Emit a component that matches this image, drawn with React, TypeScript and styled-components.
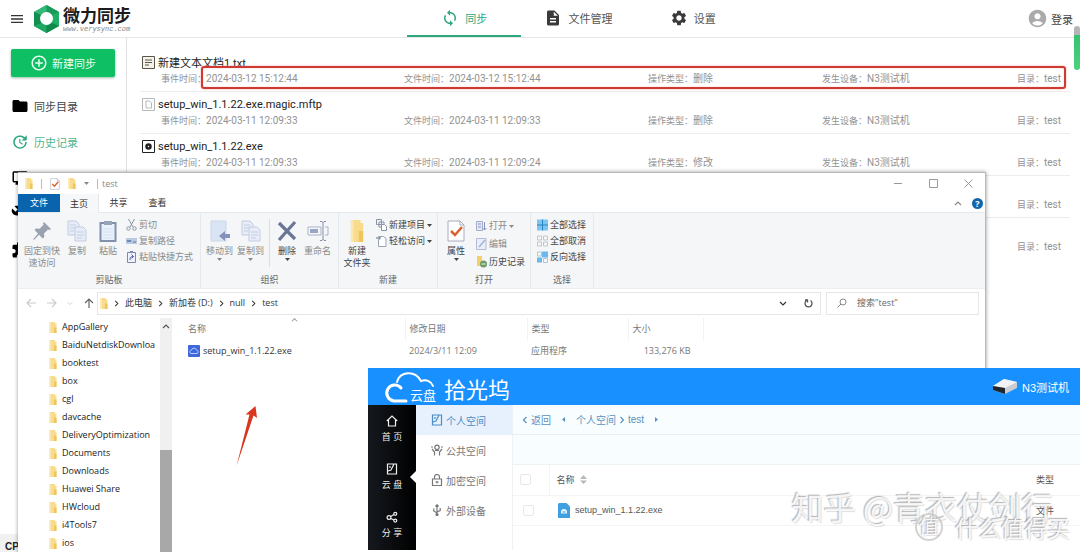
import React from 'react';
import styled, { createGlobalStyle, css } from 'styled-components';
import {
  MdMenu, MdSync, MdDescription, MdSettings, MdAccountCircle, MdFolder, MdUpdate,
  MdAddCircleOutline, MdOutlineMonitor, MdBuild, MdExtension,
} from 'react-icons/md';

const uiFont = `Roboto, "Noto Sans CJK SC", sans-serif`;
const winFont = `"Open Sans", "Noto Sans CJK SC", sans-serif`;
const cloudFont = `"Liberation Sans", "Noto Sans CJK SC", sans-serif`;
const green = '#2fa87c';

const GlobalStyle = createGlobalStyle`
  *, *::before, *::after { box-sizing: border-box; }
  body { margin: 0; background: #fff; font-family: ${uiFont}; color: #333; }
  button, input { font: inherit; color: inherit; margin: 0; }
  button { padding: 0; border: 0; background: none; cursor: pointer; }
  ul, dl, dd { margin: 0; padding: 0; list-style: none; }
  a { color: inherit; text-decoration: none; }
  svg { display: block; flex: none; }
`;

/* ---------- sync application ---------- */

const Page = styled.div`
  position: relative;
  display: flex;
  flex-direction: column;
  min-height: 100vh;
  overflow: hidden;
`;

const Header = styled.header`
  display: grid;
  grid-template-columns: 407fr 343px 330fr;
  height: 38px;
  border-bottom: 1px solid #e6e8e8;
`;

const Brand = styled.div`
  display: flex;
  align-items: center;
  padding-left: 9px;
  gap: 9px;
`;

const IconButton = styled.button`
  display: flex;
  color: #333;
`;

const BrandLink = styled.a`
  display: flex;
  align-items: center;
  gap: 4px;
`;

const BrandText = styled.span`
  display: flex;
  flex-direction: column;
`;

const BrandName = styled.span`
  font-size: 17px;
  line-height: 20px;
  font-weight: 700;
  color: #1c1c1c;
`;

const BrandUrl = styled.span`
  font: italic 7px/6px "Liberation Mono", monospace;
  color: #888;
`;

const Tabs = styled.nav`
  display: flex;
`;

const Tab = styled.button<{ $active?: boolean }>`
  flex: 1;
  display: flex;
  align-items: center;
  justify-content: center;
  gap: 6px;
  font-size: 11px;
  color: ${p => (p.$active ? green : '#555')};
  border-bottom: 2px solid ${p => (p.$active ? green : 'transparent')};
  svg { color: ${p => (p.$active ? green : '#3a3a3a')}; }
`;

const Login = styled.button`
  display: flex;
  align-items: center;
  justify-self: end;
  gap: 3px;
  padding-right: 7px;
  font-size: 11px;
  color: #444;
  svg { color: #aaa; }
`;

const Body = styled.div`
  flex: 1;
  display: flex;
`;

const Sidebar = styled.aside`
  flex: 0 0 127px;
  display: flex;
  flex-direction: column;
  border-right: 1px solid #e2e2e2;
`;

const NewSync = styled.button`
  display: flex;
  align-items: center;
  justify-content: center;
  gap: 4px;
  height: 28px;
  margin: 11px;
  border-radius: 2px;
  background: #0ebf63;
  box-shadow: 0 1px 3px rgba(0, 90, 40, 0.4);
  color: #eafff3;
  font-size: 11px;
`;

const SideItem = styled.button<{ $active?: boolean }>`
  display: flex;
  align-items: center;
  gap: 5px;
  width: 100%;
  height: 36px;
  padding-left: 11px;
  font-size: 11px;
  color: ${p => (p.$active ? '#4fb58e' : '#444')};
  svg { color: ${p => (p.$active ? green : '#000')}; }
`;

const SideFooter = styled.footer`
  height: 18px;
  margin-top: auto;
  padding-left: 5px;
  overflow: hidden;
  background: #f1f1f1;
  font: 700 10px/26px ${cloudFont};
  color: #222;
`;

const Events = styled.ul`
  flex: 1;
  padding: 12px 10px 0 13px;
`;

const EventRow = styled.li`
  position: relative;
  padding: 4px 0 3px 2px;
  border-bottom: 1px solid #ececec;
  &:last-child { border-bottom-color: transparent; }
`;

const EventName = styled.div`
  display: flex;
  align-items: center;
  gap: 3px;
  height: 16px;
  font-size: 11px;
  color: #222;
`;

const EventMeta = styled.dl`
  display: grid;
  grid-template-columns: 243fr 244fr 174fr 195fr 53fr;
  height: 18px;
  padding-left: 19px;
  line-height: 18px;
  color: #929292;
  white-space: nowrap;
  div { display: flex; }
  dt { font-size: 9px; }
  dd { font-size: 10px; }
`;

const Highlight = styled.div`
  position: absolute;
  top: 16px;
  right: 4px;
  bottom: 2px;
  left: 61px;
  border: 2px solid #cc3a31;
  border-radius: 3px;
  box-shadow: 0 0 2px #f09a94, inset 0 0 2px #f7c4c0;
`;

const PageScroll = styled.div`
  position: absolute;
  top: 26px;
  right: 0;
  width: 6px;
  height: 44px;
  border-radius: 3px;
  background: linear-gradient(#b5b5b5 9px, #35c46d 9px, #4fd07f);
`;

/* ---------- file explorer window ---------- */

const Explorer = styled.section`
  position: absolute;
  top: 172px;
  right: 94px;
  left: 18px;
  background: #fff;
  border-top: 1px solid #b9b9b9;
  border-right: 1px solid #b9b9b9;
  box-shadow: 0 0 4px rgba(0, 0, 0, 0.4);
  font-family: ${winFont};
  font-size: 9px;
  line-height: 12px;
  color: #444;
`;

const TitleBar = styled.div`
  display: flex;
  align-items: center;
  height: 21px;
  padding: 0 12px 0 7px;
  gap: 8px;
  color: #888;
`;

const Bar = styled.i`
  width: 1px;
  height: 10px;
  background: #bbb;
`;

const WindowButtons = styled.div`
  display: flex;
  gap: 26px;
  margin-left: auto;
  color: #999;
`;

const Title = styled.span`
  display: flex;
  align-items: center;
  gap: 4px;
`;

const RibbonTabs = styled.div`
  display: flex;
  align-items: stretch;
  height: 19px;
  padding-right: 2px;
  border-bottom: 1px solid #e6e9ea;
`;

const RibbonTab = styled.button<{ $kind?: 'file' | 'open' }>`
  width: 39px;
  color: #333;
  ${p => p.$kind === 'file' && css`
    width: 42px;
    background: #0a64ad;
    color: #fff;
  `}
  ${p => p.$kind === 'open' && css`
    background: #f5f7f8;
    border-right: 1px solid #e6e9ea;
    margin-bottom: -1px;
  `}
`;

const TabTools = styled.div`
  display: flex;
  align-items: center;
  gap: 10px;
  margin-left: auto;
  color: #888;
`;

const Help = styled.button`
  width: 11px;
  height: 11px;
  border-radius: 50%;
  background: #1166ab;
  color: #fff;
  font-weight: 700;
  line-height: 11px;
`;

const Ribbon = styled.div`
  display: flex;
  height: 76px;
  background: #f4f6f7;
  border-bottom: 1px solid #eceeef;
`;

const Group = styled.div<{ $width: number; $pad: number }>`
  display: flex;
  flex-direction: column;
  width: ${p => p.$width}px;
  padding-top: 4px;
  border-right: 1px solid #e6e9eb;
  > div { padding-left: ${p => p.$pad}px; }
  > span { text-align: center; line-height: 14px; color: #666; }
`;

const GroupTools = styled.div`
  display: flex;
  height: 56px;
`;

const BigButton = styled.button<{ $width: number; $dim?: boolean }>`
  display: flex;
  flex-direction: column;
  align-items: center;
  width: ${p => p.$width}px;
  color: ${p => (p.$dim ? '#8a8a8a' : '#444')};
  svg:first-child { margin: 3px 0; }
  span { white-space: nowrap; }
`;

const Divider = styled.i`
  width: 1px;
  height: 48px;
  margin: 2px 2px 0 3px;
  background: #dcdfe2;
`;

const SmallList = styled.div<{ $pitch: number }>`
  display: flex;
  flex-direction: column;
  padding-left: 3px;
  button { height: ${p => p.$pitch}px; }
`;

const SmallButton = styled.button<{ $dim?: boolean }>`
  display: flex;
  align-items: center;
  gap: 2px;
  white-space: nowrap;
  color: ${p => (p.$dim ? '#8a8a8a' : '#444')};
`;

const AddressRow = styled.div`
  display: flex;
  align-items: center;
  height: 27px;
  padding: 1px 6px 0 8px;
`;

const NavArrows = styled.div`
  display: flex;
  align-items: center;
  justify-content: space-between;
  width: 68px;
  margin-right: 3px;
`;

const Address = styled.div`
  flex: 1;
  display: flex;
  align-items: center;
  gap: 5px;
  height: 23px;
  padding: 0 7px 0 2px;
  border: 1px solid #e6e6e6;
  color: #333;
  button:last-child { margin-left: 12px; }
`;

const Spacer = styled.span`
  flex: 1;
`;

const Search = styled.label`
  display: flex;
  align-items: center;
  gap: 10px;
  width: 153px;
  height: 23px;
  margin-left: 5px;
  padding-left: 10px;
  border: 1px solid #e6e6e6;
  input {
    width: 100px;
    padding: 0;
    border: 0;
    outline: 0;
    background: none;
  }
  input::placeholder { color: #666; opacity: 1; }
`;

const Panes = styled.div`
  display: flex;
  padding: 2px 0 2px;
`;

const Tree = styled.ul`
  width: 142px;
  overflow: hidden;
  padding-left: 31px;
`;

const TreeItem = styled.button`
  display: flex;
  align-items: center;
  gap: 5px;
  height: 18px;
  color: #222;
  white-space: nowrap;
`;

const TreeScroll = styled.div`
  display: flex;
  flex-direction: column;
  align-items: center;
  justify-content: space-between;
  width: 12px;
  padding-top: 4px;
  background: #f0f0f0;
  &::after {
    content: '';
    width: 12px;
    height: 102px;
    background: #a8a8a8;
  }
`;

const FilePane = styled.div`
  position: relative;
  flex: 1;
`;

const FileTable = styled.table`
  border-collapse: collapse;
  table-layout: fixed;
  width: 532px;
  th, td {
    height: 22px;
    padding: 0 0 0 4px;
    text-align: left;
    font-weight: 400;
    color: #777;
  }
  th { border-right: 1px solid #f3f3f3; }
  th:first-child, td:first-child { padding-left: 16px; width: 233px; }
  td:first-child { color: #333; }
  th:nth-child(2) { width: 122px; }
  th:nth-child(3) { width: 101px; }
  td:last-child { text-align: right; padding-right: 13px; }
`;

const FileName = styled.span`
  display: flex;
  align-items: center;
  gap: 3px;
`;

const SortMark = styled.span`
  position: absolute;
  top: -2px;
  left: 119px;
  color: #999;
`;

const RedArrow = styled.svg`
  position: absolute;
  top: 87px;
  left: 63px;
`;

/* ---------- cloud drive window ---------- */

const Cloud = styled.section`
  position: absolute;
  top: 368px;
  right: 0;
  left: 368px;
  background: #fff;
  font-family: ${cloudFont};
  font-size: 9px;
  color: #555;
`;

const CloudHeader = styled.header`
  display: flex;
  align-items: center;
  height: 37px;
  padding: 0 11px 0 16px;
  gap: 8px;
  background: #1890ff;
  color: #fff;
`;

const CloudTitle = styled.span`
  font-size: 22px;
  line-height: 26px;
  padding-top: 9px;
`;

const Device = styled.span`
  display: flex;
  align-items: center;
  gap: 5px;
  margin-left: auto;
  font-size: 11px;
`;

const CloudBody = styled.div`
  display: flex;
  align-items: flex-start;
  padding-bottom: 4px;
`;

const Rail = styled.nav`
  width: 48px;
  padding-bottom: 1px;
  background: linear-gradient(90deg, #15191e, #000);
`;

const RailItem = styled.button<{ $active?: boolean }>`
  position: relative;
  display: flex;
  flex-direction: column;
  align-items: center;
  gap: 3px;
  width: 48px;
  height: 48px;
  padding-top: 10px;
  color: #eee;
  line-height: 14px;
  ${p => p.$active && css`
    &::after {
      content: '';
      position: absolute;
      top: 18px;
      right: 0;
      border: 6px solid transparent;
      border-left-width: 0;
      border-right-color: #fff;
    }
  `}
`;

const Spaces = styled.nav`
  align-self: stretch;
  width: 97px;
  border-right: 1px solid #eef2f4;
`;

const SpaceItem = styled.button<{ $active?: boolean }>`
  display: flex;
  align-items: center;
  gap: 3px;
  width: 100%;
  height: 30px;
  padding-left: 15px;
  font-size: 10px;
  color: ${p => (p.$active ? '#4a8cc7' : '#777')};
  background: ${p => (p.$active ? '#e6f1fd' : 'none')};
`;

const CloudMain = styled.div`
  flex: 1;
`;

const Crumbs = styled.div`
  display: flex;
  align-items: center;
  gap: 2px;
  height: 30px;
  padding-left: 8px;
  font-size: 10px;
  color: #5a90bf;
  background: #f8feff;
  border-bottom: 1px solid #e6f0f3;
`;

const CrumbStep = styled.span`
  display: flex;
  padding: 0 8px;
`;

const Toolbar = styled.div`
  height: 30px;
  background: #f8feff;
  border-bottom: 1px solid #edf2f4;
`;

const CloudTable = styled.table`
  width: 100%;
  border-collapse: collapse;
  table-layout: fixed;
  th, td {
    height: 30px;
    padding: 0 7px;
    border-bottom: 1px solid #f2f4f6;
    text-align: left;
    font-weight: 400;
  }
  th:first-child { width: 36px; border-right: 1px solid #f2f4f6; }
  td:first-child { padding-left: 10px; }
  th:last-child { width: 51px; }
  td:nth-child(2) { padding-left: 9px; }
`;

const Check = styled.input`
  display: block;
  appearance: none;
  width: 11px;
  height: 11px;
  border: 1px solid #e6e8ea;
  border-radius: 2px;
  background: #fff;
`;

const Cell = styled.span`
  display: flex;
  align-items: center;
  gap: 5px;
`;

/* ---------- watermarks ---------- */

const Mark = styled.div<{ $size: number; $right: number; $bottom: number }>`
  position: absolute;
  right: ${p => p.$right}px;
  bottom: ${p => p.$bottom}px;
  display: flex;
  align-items: center;
  gap: 12px;
  font-family: "Noto Sans CJK SC", sans-serif;
  font-size: ${p => p.$size}px;
  line-height: ${p => p.$size}px;
  white-space: nowrap;
  color: rgba(255, 255, 255, 0.85);
  text-shadow: -1px -1px 1px rgba(110, 110, 110, 0.5), 1px 1px 1px rgba(150, 150, 150, 0.3);
  pointer-events: none;
`;

const Seal = styled.span`
  width: 28px;
  height: 28px;
  border: 2px solid rgba(200, 200, 200, 0.8);
  border-radius: 50%;
  text-align: center;
  font-size: 20px;
  line-height: 22px;
`;

/* ---------- drawings ---------- */

const HexLogo = () => (
  <svg width="25" height="28" viewBox="0 0 25 28">
    <path d="M12.500 0 25 7v14l-12.500 7L0 21V7z" fill="#16a75c" />
    <path d="M12.500 0 25 7l-7 3-5.500-3z" fill="#1a9a58" />
    <path d="M12.500 0 0 7l7 3 5.500-3z" fill="#35b877" />
    <path d="M0 7v14l7-3v-8z" fill="#128f4e" />
    <path d="M25 7v14l-7-3v-8z" fill="#1fae66" />
    <path d="M0 21l12.500 7v-7L7 18z" fill="#1fa864" />
    <path d="M25 21l-12.500 7v-7L18 18z" fill="#0f8a4a" />
    <circle cx="12.500" cy="13.500" r="6.500" fill="#fff" />
  </svg>
);

const TextFile = () => (
  <svg width="13" height="13" viewBox="0 0 13 13" fill="none" stroke="#5b5748">
    <path d="M.5.5h12v12H.5z" fill="#f4f2ea" />
    <path d="M3 4h7M3 6.500h7M3 9h4" />
  </svg>
);
const BlankFile = () => (
  <svg width="13" height="13" viewBox="0 0 13 13" fill="none" stroke="#b5b8bd">
    <path d="M.5.5h12v12H.5z" />
    <path d="M4 3h3.500l2 2v5H4z" />
  </svg>
);
const ExeFile = () => (
  <svg width="13" height="13" viewBox="0 0 13 13" fill="none" stroke="#222">
    <path d="M.5.5h12v12H.5z" />
    <circle cx="6.500" cy="6.500" r="2" strokeWidth="2.500" />
  </svg>
);

const Folder = ({ w = 8, h = 11 }: { w?: number; h?: number }) => (
  <svg width={w} height={h} viewBox="0 0 8 11" preserveAspectRatio="none">
    <path d="M.5 0H6v1.500h1.500V11H.5z" fill="#f8dc8c" />
    <path d="M5 5.500h2.500V11H5z" fill="#efc55c" />
    <path d="M.5 0H2v11H.5z" fill="#fbe8b0" />
  </svg>
);

const Chevron = ({ dir, size = 8, color = 'currentColor' }: { dir: 'up' | 'down' | 'left' | 'right'; size?: number; color?: string }) => {
  const d = { up: 'M1 6l3-3 3 3', down: 'M1 3l3 3 3-3', left: 'M5.500 1l-3 3 3 3', right: 'M2.500 1l3 3-3 3' }[dir];
  return <svg width={size} height={size} viewBox="0 0 8 8" fill="none" stroke={color} strokeWidth="1.200"><path d={d} /></svg>;
};

const Caret = ({ dir = 'down' }: { dir?: 'down' | 'left' | 'right' }) => {
  const d = { down: 'M0 1h5L2.500 4z', left: 'M4 0v5L1 2.500z', right: 'M1 0v5l3-2.500z' }[dir];
  return <svg width="5" height="5" viewBox="0 0 5 5" fill="currentColor"><path d={d} /></svg>;
};

const LongArrow = ({ dir, color }: { dir: 'left' | 'right' | 'up'; color: string }) => {
  const d = { left: 'M10 5H1M5 1 1 5l4 4', right: 'M0 5h9M5 1l4 4-4 4', up: 'M5 10V1M1 5l4-4 4 4' }[dir];
  return <svg width="10" height="10" viewBox="0 0 10 10" fill="none" stroke={color} strokeWidth="1.200"><path d={d} /></svg>;
};

const LineGlyph = ({ d }: { d: string }) => (
  <svg width="9" height="9" viewBox="0 0 9 9" fill="none" stroke="currentColor"><path d={d} /></svg>
);

const CheckedSheet = ({ w, h }: { w: number; h: number }) => (
  <svg width={w} height={h} viewBox="0 0 18 22" fill="none">
    <path d="M1 1h12l4 4v16H1z" fill="#fff" stroke="#aab" />
    <path d="M13 1v4h4" stroke="#aab" />
    <path d="m4 11 4 4 7-8" stroke="#d8612f" strokeWidth="2.500" />
  </svg>
);

const Pin = () => (
  <svg width="22" height="22" viewBox="0 0 22 22" fill="#9aa1af">
    <path d="m13 2 7 7-1.500 1-1.500-.5-4 4 .3 3.500-1.600 1.500-3.700-3.700L3 20l-.8-.8L7 13.500 3.500 10 5 8.500l3.500.2 4-4L12 3.300z" />
  </svg>
);
const Sheets = () => (
  <svg width="20" height="22" viewBox="0 0 20 22" fill="#e6edf8" stroke="#c3cce0">
    <path d="M1 1h8l3 3v11H1z" />
    <path d="M3 5h6M3 8h6M3 11h4" />
    <path d="M8 7h8l3 3v11H8z" />
    <path d="M10 12h7M10 15h7M10 18h5" />
  </svg>
);
const Clipboard = () => (
  <svg width="18" height="22" viewBox="0 0 18 22" fill="none">
    <path d="M1.500 3h15v18h-15z" fill="#e9f1fb" stroke="#8291ab" strokeWidth="2" />
    <path d="M5 1h8v4H5z" fill="#97a3b6" />
    <path d="M4 9h10M4 12h10M4 15h10M4 18h10" stroke="#d3e0f1" />
  </svg>
);
const MoveTo = () => (
  <svg width="22" height="22" viewBox="0 0 22 22">
    <path d="M2 1h15v20H2z" fill="#d9e4f5" stroke="#cbd7ec" />
    <path d="m10 16 6-5v3h5v4h-5v3z" fill="#8593ba" />
  </svg>
);
const Cross = () => (
  <svg width="22" height="22" viewBox="0 0 22 22" stroke="#6b7696" strokeWidth="3.200" fill="none">
    <path d="M3 3l16 16M19 2 3 20" />
  </svg>
);
const Rename = () => (
  <svg width="22" height="22" viewBox="0 0 22 22" fill="none" stroke="#a9b3c8">
    <path d="M1 7h13v8H1zM18 7h3v8h-3" />
    <path d="M3 9h8v4H3z" fill="#9aa6c6" stroke="none" />
    <path d="M13 1.500h2l1 1 1-1h2M16 2v18M13 20.500h2l1-1 1 1h2" stroke="#848fa5" />
  </svg>
);

const small = { width: 11, height: 12, viewBox: '0 0 11 12', fill: 'none' };
const Scissors = () => (
  <svg {...small} stroke="#8b93a3"><path d="M2.500 0 7 8M8.500 0 4 8" /><circle cx="2.500" cy="9.500" r="1.700" /><circle cx="8.500" cy="9.500" r="1.700" /></svg>
);
const PathTag = () => (
  <svg {...small}><path d="M0 3h11v6H0z" fill="#b9cbe3" /><path d="M1 5l1 2 1-2 1 2 1-2M7 7h3" stroke="#5f7ba5" /></svg>
);
const Shortcut = () => (
  <svg {...small} stroke="#7c88b0"><path d="M1.500 1.500h8v10h-8z" fill="#eef2fb" /><path d="M4 .5h3" strokeWidth="2" /><path d="M4 9c0-3 1-3.500 3.500-3.500M5.500 3.500l2 2-2 2" stroke="#5163a8" /></svg>
);
const NewItem = () => (
  <svg {...small} stroke="#8a94a6"><path d="M.5.500h5v5h-5zM3 3h5v5H3z" fill="#eef2f8" /><path d="M5.500 5.500h3l2 2v4h-5z" fill="#fff" /></svg>
);
const EasyAccess = () => (
  <svg {...small} stroke="#9aa4b5"><path d="M3.500 1.500h4l2.500 2v8H2.500V5" fill="#fff" /><path d="M0 3h4M2.500 1 4.500 3l-2 2" stroke="#5b6b8e" /></svg>
);
const OpenIcon = () => (
  <svg {...small} stroke="#a3adcb"><path d="M.5 1.500h6v9h-6z" fill="#e5eaf6" /><path d="M2 4h3M2 7h3M8.500 2v8M6.500 8l2 2 2-2" stroke="#8592bd" /></svg>
);
const EditIcon = () => (
  <svg {...small} stroke="#b3bcd6"><path d="M.5.5h9.500v11H.5z" fill="#e8eefa" /><path d="m3 9 6-7" stroke="#a6b2d6" strokeWidth="1.500" /></svg>
);
const HistoryIcon = () => (
  <svg {...small}><path d="M1 0h5v10H1z" fill="#f2d06e" /><circle cx="7.500" cy="8" r="3.500" fill="#6f9a68" /><path d="M5.500 8h4" stroke="#dfe" /></svg>
);
const SelectAll = () => (
  <svg {...small}><path d="M0 .5h11v11H0z" fill="#7cc4f2" /><path d="M5.500.5v11M0 6h11" stroke="#2f83bd" /></svg>
);
const SelectNone = () => (
  <svg {...small} stroke="#c3c7cc"><path d="M.5 1h4v4h-4zM6.500 1h4v4h-4zM.5 7h4v4h-4zM6.500 7h4v4h-4z" /></svg>
);
const SelectInvert = () => (
  <svg {...small}><path d="M5 .5h6v6H5zM0 6.500h5v5H0z" fill="#6bb8ec" /><path d="M.5 1h4v4h-4zM6.500 7.500h4v4h-4z" stroke="#b4c6d6" /></svg>
);

const CloudLogo = () => (
  <svg width="52" height="34" viewBox="0 0 52 34" fill="none" stroke="#fff" strokeLinecap="round">
    <path d="M17 18a8 8 0 1 0-7 13h12" strokeWidth="3" />
    <path d="M13 12C16 1 31 0 37 11c5-2 10 0 12 5" strokeWidth="2" />
    <text x="26" y="30" fill="#fff" stroke="none" fontSize="13" fontFamily="Noto Sans CJK SC, sans-serif">云盘</text>
  </svg>
);
const DeviceBox = () => (
  <svg width="24" height="15" viewBox="0 0 24 15">
    <path d="M0 7 11 0l13 3v6l-12 6L0 11z" fill="#c9cdd2" />
    <path d="M0 7 11 0l13 3-12 6z" fill="#f2f3f4" />
    <path d="m0 7 12 2v6L0 11z" fill="#20262c" />
  </svg>
);
const line = { width: 12, height: 12, viewBox: '0 0 12 12', fill: 'none', stroke: 'currentColor', strokeWidth: 1.2 };
const Home = () => <svg {...line}><path d="M.8 6 6 1l5.200 5M2.500 5v6h7V5" /></svg>;
const Disk = () => <svg {...line}><path d="M1.500 1h9v10h-9zM2 8l3-1 3-6M4 3v2" /></svg>;
const Share = () => (
  <svg {...line}><circle cx="3" cy="6.500" r="1.900" /><circle cx="9.300" cy="2.800" r="1.500" /><circle cx="9.300" cy="9.600" r="1.500" /><path d="M4.700 5.500 8 3.500M4.700 7.500 8 9" /></svg>
);
const People = () => (
  <svg {...line}><circle cx="6" cy="3.300" r="2.200" /><path d="M3.500 11.500V8L1 5M8.500 11.500V8L11 5M.5 2.500l1 1M11.500 2.500l-1 1M4 6.500h4" /></svg>
);
const Lock = () => <svg {...line}><path d="M1.500 5h9v6.500h-9zM3.500 5V3a2.500 2.500 0 0 1 5 0v2M6 7v2.500M4.500 8h3" /></svg>;
const Usb = () => <svg {...line}><path d="M6 11V1M4.500 2.500 6 .8l1.500 1.700M6 9 2.800 7V4.500M6 8l3.200-1.500V4" /><circle cx="6" cy="10.500" r="1" fill="currentColor" /></svg>;

/* ---------- data ---------- */

const events = [
  { icon: <TextFile />, name: '新建文本文档1.txt', at: '2024-03-12 15:12:44', file: '2024-03-12 15:12:44', op: '删除' },
  { icon: <BlankFile />, name: 'setup_win_1.1.22.exe.magic.mftp', at: '2024-03-11 12:09:33', file: '2024-03-11 12:09:33', op: '删除' },
  { icon: <ExeFile />, name: 'setup_win_1.1.22.exe', at: '2024-03-11 12:09:33', file: '2024-03-11 12:09:24', op: '修改' },
  { icon: null, name: '', at: '', file: '', op: '' },
  { icon: null, name: '', at: '', file: '', op: '' },
];

const folders = [
  'AppGallery', 'BaiduNetdiskDownloa', 'booktest', 'box', 'cgl', 'davcache', 'DeliveryOptimization',
  'Documents', 'Downloads', 'Huawei Share', 'HWcloud', 'i4Tools7', 'ios',
];

const Meta = ({ label, value }: { label: string; value: string }) => (
  <div>{value && <><dt>{label}：</dt><dd>{value}</dd></>}</div>
);

/* ---------- sections ---------- */

const SyncHeader = () => (
  <Header>
    <Brand>
      <IconButton aria-label="菜单"><MdMenu size={16} /></IconButton>
      <BrandLink href="#">
        <HexLogo />
        <BrandText>
          <BrandName>微力同步</BrandName>
          <BrandUrl>www.verysync.com</BrandUrl>
        </BrandText>
      </BrandLink>
    </Brand>
    <Tabs>
      <Tab $active><MdSync size={18} />同步</Tab>
      <Tab><MdDescription size={18} />文件管理</Tab>
      <Tab><MdSettings size={18} />设置</Tab>
    </Tabs>
    <Login><MdAccountCircle size={21} />登录</Login>
  </Header>
);

const ExplorerWindow = () => (
  <Explorer>
    <TitleBar>
      <Folder />
      <Bar />
      <CheckedSheet w={10} h={12} />
      <Folder />
      <Caret />
      <Title><Bar />test</Title>
      <WindowButtons>
        <button aria-label="最小化"><LineGlyph d="M0 4.500h8" /></button>
        <button aria-label="最大化"><LineGlyph d="M.5.5h8v8h-8z" /></button>
        <button aria-label="关闭"><LineGlyph d="M.5.5l8 8M8.500.5l-8 8" /></button>
      </WindowButtons>
    </TitleBar>
    <RibbonTabs>
      <RibbonTab $kind="file">文件</RibbonTab>
      <RibbonTab $kind="open">主页</RibbonTab>
      <RibbonTab>共享</RibbonTab>
      <RibbonTab>查看</RibbonTab>
      <TabTools>
        <Chevron dir="up" />
        <Help>?</Help>
      </TabTools>
    </RibbonTabs>
    <Ribbon>
      <Group $width={183} $pad={5}>
        <GroupTools>
          <BigButton $width={38} $dim><Pin /><span>固定到快</span><span>速访问</span></BigButton>
          <BigButton $width={32} $dim><Sheets /><span>复制</span></BigButton>
          <BigButton $width={30} $dim><Clipboard /><span>粘贴</span></BigButton>
          <SmallList $pitch={16}>
            <SmallButton $dim><Scissors />剪切</SmallButton>
            <SmallButton $dim><PathTag />复制路径</SmallButton>
            <SmallButton $dim><Shortcut />粘贴快捷方式</SmallButton>
          </SmallList>
        </GroupTools>
        <span>剪贴板</span>
      </Group>
      <Group $width={138} $pad={3}>
        <GroupTools>
          <BigButton $width={31} $dim><MoveTo /><span>移动到</span><Caret /></BigButton>
          <BigButton $width={31} $dim><Sheets /><span>复制到</span><Caret /></BigButton>
          <Divider />
          <BigButton $width={30}><Cross /><span>删除</span><Caret /></BigButton>
          <BigButton $width={31} $dim><Rename /><span>重命名</span></BigButton>
        </GroupTools>
        <span>组织</span>
      </Group>
      <Group $width={99} $pad={2}>
        <GroupTools>
          <BigButton $width={32}><Folder w={14} h={22} /><span>新建</span><span>文件夹</span></BigButton>
          <SmallList $pitch={16}>
            <SmallButton><NewItem />新建项目<Caret /></SmallButton>
            <SmallButton><EasyAccess />轻松访问<Caret /></SmallButton>
          </SmallList>
        </GroupTools>
        <span>新建</span>
      </Group>
      <Group $width={93} $pad={1}>
        <GroupTools>
          <BigButton $width={34}><CheckedSheet w={18} h={22} /><span>属性</span><Caret /></BigButton>
          <SmallList $pitch={18}>
            <SmallButton $dim><OpenIcon />打开<Caret /></SmallButton>
            <SmallButton $dim><EditIcon />编辑</SmallButton>
            <SmallButton><HistoryIcon />历史记录</SmallButton>
          </SmallList>
        </GroupTools>
        <span>打开</span>
      </Group>
      <Group $width={63} $pad={3}>
        <GroupTools>
          <SmallList $pitch={16}>
            <SmallButton><SelectAll />全部选择</SmallButton>
            <SmallButton><SelectNone />全部取消</SmallButton>
            <SmallButton><SelectInvert />反向选择</SmallButton>
          </SmallList>
        </GroupTools>
        <span>选择</span>
      </Group>
    </Ribbon>
    <AddressRow>
      <NavArrows>
        <LongArrow dir="left" color="#ccc" />
        <LongArrow dir="right" color="#ccc" />
        <Chevron dir="down" size={6} color="#ccc" />
        <LongArrow dir="up" color="#666" />
      </NavArrows>
      <Address>
        <Folder />
        <Chevron dir="right" size={7} />
        <span>此电脑</span>
        <Chevron dir="right" size={7} />
        <span>新加卷 (D:)</span>
        <Chevron dir="right" size={7} />
        <span>null</span>
        <Chevron dir="right" size={7} />
        <span>test</span>
        <Spacer />
        <button aria-label="历史位置"><Chevron dir="down" /></button>
        <button aria-label="刷新">
          <svg width="9" height="9" viewBox="0 0 9 9" fill="none" stroke="#555" strokeWidth="1.300"><path d="M6.500 1.500a3.500 3.500 0 1 1-4 0M1 1h2.500v2.500" /></svg>
        </button>
      </Address>
      <Search>
        <svg width="10" height="10" viewBox="0 0 10 10" fill="none" stroke="#888"><circle cx="6" cy="4" r="3" /><path d="M4 6 .5 9.500" /></svg>
        <input type="text" placeholder={'搜索"test"'} aria-label="搜索" />
      </Search>
    </AddressRow>
    <Panes>
      <Tree>
        {folders.map(name => (
          <li key={name}><TreeItem><Folder />{name}</TreeItem></li>
        ))}
      </Tree>
      <TreeScroll><Chevron dir="up" color="#555" /></TreeScroll>
      <FilePane>
        <SortMark><Chevron dir="up" size={7} /></SortMark>
        <FileTable>
          <thead>
            <tr><th>名称</th><th>修改日期</th><th>类型</th><th>大小</th></tr>
          </thead>
          <tbody>
            <tr>
              <td>
                <FileName>
                  <svg width="12" height="12" viewBox="0 0 12 12" fill="none">
                    <rect width="12" height="12" rx="1" fill="#3f68d8" />
                    <path d="M3 8.500a1.800 1.800 0 0 1 .5-3.500 2.600 2.600 0 0 1 5 0 1.800 1.800 0 0 1 .5 3.500z" stroke="#b9ccff" />
                  </svg>
                  setup_win_1.1.22.exe
                </FileName>
              </td>
              <td>2024/3/11 12:09</td>
              <td>应用程序</td>
              <td>133,276 KB</td>
            </tr>
          </tbody>
        </FileTable>
        <RedArrow width="24" height="62" viewBox="0 0 24 62">
          <path d="M1.500 61 14.500 9.500l-4 0L20.500 1l1.500 12-3.500-2.500z" fill="#d9351f" />
        </RedArrow>
      </FilePane>
    </Panes>
  </Explorer>
);

const CloudWindow = () => (
  <Cloud>
    <CloudHeader>
      <CloudLogo />
      <CloudTitle>拾光坞</CloudTitle>
      <Device><DeviceBox />N3测试机</Device>
    </CloudHeader>
    <CloudBody>
      <Rail>
        <RailItem><Home />首 页</RailItem>
        <RailItem $active><Disk />云 盘</RailItem>
        <RailItem><Share />分 享</RailItem>
      </Rail>
      <Spaces>
        <SpaceItem $active><Disk />个人空间</SpaceItem>
        <SpaceItem><People />公共空间</SpaceItem>
        <SpaceItem><Lock />加密空间</SpaceItem>
        <SpaceItem><Usb />外部设备</SpaceItem>
      </Spaces>
      <CloudMain>
        <Crumbs>
          <Chevron dir="left" size={8} />
          <a href="#">返回</a>
          <CrumbStep><Caret dir="left" /></CrumbStep>
          <a href="#">个人空间</a>
          <Chevron dir="right" size={8} />
          <a href="#">test</a>
          <CrumbStep><Caret dir="right" /></CrumbStep>
        </Crumbs>
        <Toolbar />
        <CloudTable>
          <thead>
            <tr>
              <th><Check type="checkbox" aria-label="全选" /></th>
              <th>
                <Cell>
                  名称
                  <svg width="7" height="9" viewBox="0 0 7 9" fill="#b5b8bc"><path d="M0 4h7L3.500 0zM0 5.500h7L3.500 9z" /></svg>
                </Cell>
              </th>
              <th>类型</th>
            </tr>
          </thead>
          <tbody>
            <tr>
              <td><Check type="checkbox" aria-label="setup_win_1.1.22.exe" /></td>
              <td>
                <Cell>
                  <svg width="12" height="15" viewBox="0 0 12 15">
                    <path d="M1 0h7.500L12 3.500V15H0V1z" fill="#3f9fe0" />
                    <path d="M3 9a3 3 0 0 1 6 0v1.500H3z" fill="#eaf6ff" />
                    <path d="M4.500 9h3" stroke="#3f9fe0" />
                  </svg>
                  setup_win_1.1.22.exe
                </Cell>
              </td>
              <td>文件</td>
            </tr>
          </tbody>
        </CloudTable>
      </CloudMain>
    </CloudBody>
  </Cloud>
);

export default function App() {
  return (
    <>
      <GlobalStyle />
      <Page>
        <SyncHeader />
        <Body>
          <Sidebar>
            <NewSync><MdAddCircleOutline size={18} />新建同步</NewSync>
            <SideItem><MdFolder size={18} />同步目录</SideItem>
            <SideItem $active><MdUpdate size={18} />历史记录</SideItem>
            <SideItem aria-label="设备"><MdOutlineMonitor size={18} /></SideItem>
            <SideItem aria-label="工具"><MdBuild size={18} /></SideItem>
            <SideItem aria-label="扩展"><MdExtension size={18} /></SideItem>
            <SideFooter>CPU</SideFooter>
          </Sidebar>
          <Events>
            {events.map((e, i) => (
              <EventRow key={i}>
                <EventName>{e.icon}{e.name}</EventName>
                <EventMeta>
                  <Meta label="事件时间" value={e.at} />
                  <Meta label="文件时间" value={e.file} />
                  <Meta label="操作类型" value={e.op} />
                  <Meta label="发生设备" value={e.name && 'N3测试机'} />
                  <Meta label="目录" value="test" />
                </EventMeta>
                {i === 0 && <Highlight />}
              </EventRow>
            ))}
          </Events>
        </Body>
        <PageScroll />
        <ExplorerWindow />
        <CloudWindow />
        <Mark $size={32} $right={27} $bottom={30}>知乎 @青衣仗剑行</Mark>
        <Mark $size={23} $right={10} $bottom={11}><Seal>值</Seal>什么值得买</Mark>
      </Page>
    </>
  );
}
